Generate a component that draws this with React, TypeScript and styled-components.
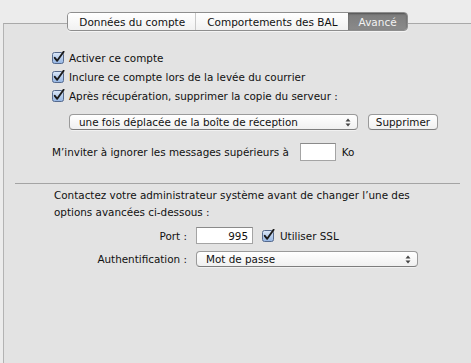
import React from 'react';
import styled, { createGlobalStyle } from 'styled-components';

const GlobalStyle = createGlobalStyle`
  html, body {
    margin: 0;
    padding: 0;
    background: #ececec;
  }
  body {
    font-family: "DejaVu Sans", "Lucida Grande", Verdana, sans-serif;
    font-size: 10.4px;
    color: #111;
  }
`;

const colors = {
  window: '#ececec',
  panel: '#e3e3e3',
  panelBorder: '#a9a9a9',
  control: '#9a9a9a',
  text: '#111111',
};

const Window = styled.div`
  width: 471px;
  height: 363px;
  padding-top: 12px;
  box-sizing: border-box;
  overflow: hidden;
  background: ${colors.window};
`;

const Frame = styled.div`
  margin-left: 3px;
  width: 469px;
`;

const TabBar = styled.div`
  display: flex;
  justify-content: center;
  position: relative;
  z-index: 1;
  margin-bottom: -8px;
`;

const Segments = styled.div`
  display: flex;
  height: 17px;
  border: 1px solid #8e8e8e;
  border-radius: 4px;
  overflow: hidden;
  box-shadow: 0 1px 0 rgba(255, 255, 255, 0.6);
`;

const Tab = styled.div<{ $active?: boolean; $divider?: boolean }>`
  display: flex;
  align-items: center;
  padding: 0 10px 0 11px;
  font-size: 10.5px;
  color: ${({ $active }) => ($active ? '#f2f2f2' : '#111')};
  background: ${({ $active }) =>
    $active
      ? 'linear-gradient(#7c7c7c, #8a8a8a)'
      : 'linear-gradient(#ffffff, #f1f1f1)'};
  border-left: ${({ $divider }) => ($divider ? '1px solid #c9c9c9' : 'none')};
  box-shadow: ${({ $active }) => ($active ? 'inset 0 1px 2px rgba(0,0,0,0.35)' : 'none')};
  white-space: nowrap;
`;

const Panel = styled.div`
  height: 342px;
  box-sizing: border-box;
  background: ${colors.panel};
  border-top: 1px solid ${colors.panelBorder};
  border-left: 1px solid #b3b3b3;
  padding-top: 24px;
`;

const CheckList = styled.div`
  padding-left: 48px;
  display: flex;
  flex-direction: column;
`;

const CheckRow = styled.label`
  display: flex;
  align-items: center;
  gap: 4px;
  height: 19px;
`;

const BoxWrap = styled.span`
  display: inline-flex;
  width: 13px;
  height: 13px;
  flex: none;
`;

const Line = styled.div<{ $top: number; $indent: number }>`
  display: flex;
  align-items: center;
  margin-top: ${({ $top }) => $top}px;
  padding-left: ${({ $indent }) => $indent}px;
`;

const PopUp = styled.div<{ $width: number }>`
  display: flex;
  align-items: center;
  justify-content: space-between;
  width: ${({ $width }) => $width}px;
  height: 16px;
  box-sizing: border-box;
  padding: 0 6px 0 9px;
  background: linear-gradient(#ffffff, #f0f0f0);
  border: 1px solid ${colors.control};
  border-bottom-color: #7d7d7d;
  border-radius: 4px;
  box-shadow: 0 1px 0 rgba(255, 255, 255, 0.5);
`;

const PushButton = styled.div`
  display: flex;
  align-items: center;
  justify-content: center;
  margin-left: 10px;
  width: 70px;
  height: 16px;
  box-sizing: border-box;
  background: linear-gradient(#ffffff, #f0f0f0);
  border: 1px solid ${colors.control};
  border-bottom-color: #7d7d7d;
  border-radius: 4px;
`;

const TextField = styled.div<{ $width: number; $height: number; $gap?: number }>`
  width: ${({ $width }) => $width}px;
  height: ${({ $height }) => $height}px;
  margin-left: ${({ $gap }) => $gap ?? 0}px;
  box-sizing: border-box;
  background: #fff;
  border: 1px solid #a4a4a4;
  border-top-color: #8a8a8a;
  display: flex;
  align-items: center;
  justify-content: flex-end;
  padding-right: 4px;
`;

const Unit = styled.span`
  margin-left: 6px;
`;

const Separator = styled.div`
  margin: 22px 0 0 11px;
  width: 445px;
  height: 1px;
  background: #a4a4a4;
`;

const Notice = styled.p`
  margin: 3px 0 0 50px;
  line-height: 17px;
`;

const FormGrid = styled.div`
  display: grid;
  grid-template-columns: 183px auto;
  column-gap: 9px;
  row-gap: 7px;
  align-items: center;
  margin-top: 6px;
`;

const FieldLabel = styled.span`
  text-align: right;
`;

const FieldControls = styled.div`
  display: flex;
  align-items: center;
`;

const InlineCheck = styled.label`
  display: flex;
  align-items: center;
  gap: 5px;
  margin-left: 9px;
`;

const CheckBox: React.FC = () => (
  <BoxWrap>
    <svg width="13" height="13" viewBox="0 0 13 13">
      <defs>
        <linearGradient id="cbFill" x1="0" y1="0" x2="0" y2="1">
          <stop offset="0" stopColor="#dce8f8" />
          <stop offset="1" stopColor="#93b4e2" />
        </linearGradient>
      </defs>
      <rect x="0.5" y="1.5" width="11" height="11" rx="2" fill="url(#cbFill)" stroke="#566a8d" />
      <path
        d="M2.8 6.8 L5.2 9.8 L11.6 0.8"
        fill="none"
        stroke="#1b1b1b"
        strokeWidth="1.9"
        strokeLinecap="round"
        strokeLinejoin="round"
      />
    </svg>
  </BoxWrap>
);

const Arrows: React.FC = () => (
  <svg width="6" height="9" viewBox="0 0 6 9">
    <path d="M3 0.5 L5.5 3.5 H0.5 Z" fill="#444" />
    <path d="M3 8.5 L5.5 5.5 H0.5 Z" fill="#444" />
  </svg>
);

const App: React.FC = () => (
  <>
    <GlobalStyle />
    <Window>
      <Frame>
        <TabBar>
          <Segments>
            <Tab>Données du compte</Tab>
            <Tab $divider>Comportements des BAL</Tab>
            <Tab $active>Avancé</Tab>
          </Segments>
        </TabBar>
        <Panel>
          <CheckList>
            <CheckRow>
              <CheckBox />
              Activer ce compte
            </CheckRow>
            <CheckRow>
              <CheckBox />
              Inclure ce compte lors de la levée du courrier
            </CheckRow>
            <CheckRow>
              <CheckBox />
              Après récupération, supprimer la copie du serveur :
            </CheckRow>
          </CheckList>

          <Line $top={9} $indent={65}>
            <PopUp $width={289}>
              <span>une fois déplacée de la boîte de réception</span>
              <Arrows />
            </PopUp>
            <PushButton>Supprimer</PushButton>
          </Line>

          <Line $top={13} $indent={48}>
            <span>M’inviter à ignorer les messages supérieurs à</span>
            <TextField $width={36} $height={18} $gap={11} />
            <Unit>Ko</Unit>
          </Line>

          <Separator />

          <Notice>
            Contactez votre administrateur système avant de changer l’une des
            <br />
            options avancées ci-dessous :
          </Notice>

          <FormGrid>
            <FieldLabel>Port :</FieldLabel>
            <FieldControls>
              <TextField $width={57} $height={17}>995</TextField>
              <InlineCheck>
                <CheckBox />
                Utiliser SSL
              </InlineCheck>
            </FieldControls>
            <FieldLabel>Authentification :</FieldLabel>
            <FieldControls>
              <PopUp $width={222}>
                <span>Mot de passe</span>
                <Arrows />
              </PopUp>
            </FieldControls>
          </FormGrid>
        </Panel>
      </Frame>
    </Window>
  </>
);

export default App;
